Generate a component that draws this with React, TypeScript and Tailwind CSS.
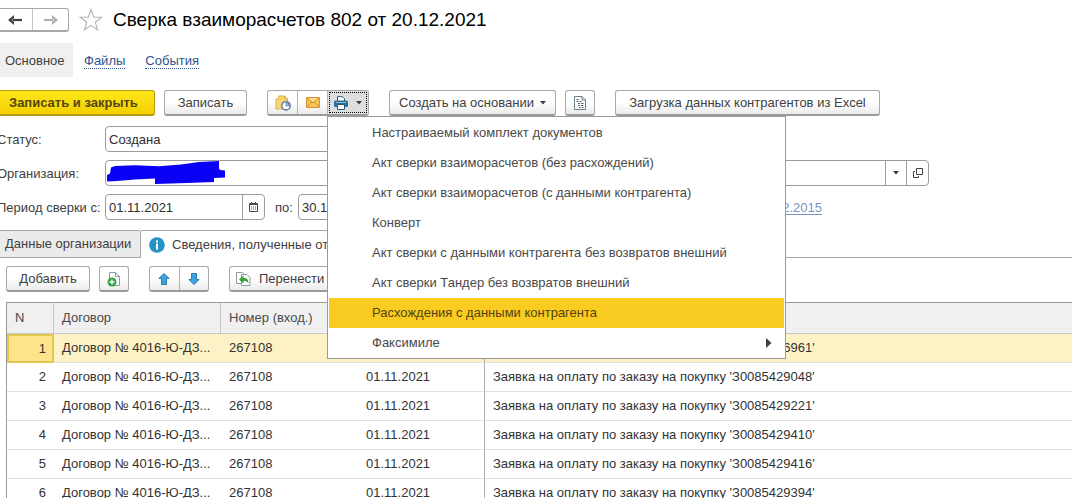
import React from "react";

const button =
  "flex h-[26px] shrink-0 items-center justify-center rounded-[3px] border border-b-2 border-[#a8a8a8] border-b-[#9a9a9a] bg-linear-to-b from-white from-50% to-[#ebebeb] whitespace-nowrap text-[#404040]";
const segment = "flex h-full items-center justify-center";
const segmented =
  "flex h-[26px] shrink-0 divide-x divide-[#b5b5b5] rounded-[3px] border border-b-2 border-[#a8a8a8] border-b-[#9a9a9a] bg-linear-to-b from-white from-50% to-[#ebebeb]";
const field = "flex h-[26px] overflow-hidden rounded-[4px] border border-[#9c9c9c] bg-white";
const input = "h-full w-full min-w-0 px-[3px] text-[#2e2e2e] outline-none";

const menuItems = [
  "Настраиваемый комплект документов",
  "Акт сверки взаиморасчетов (без расхождений)",
  "Акт сверки взаиморасчетов (с данными контрагента)",
  "Конверт",
  "Акт сверки с данными контрагента без возвратов внешний",
  "Акт сверки Тандер без возвратов внешний",
  "Расхождения с данными контрагента",
  "Факсимиле",
];

const orders = [
  "З0085426961",
  "З0085429048",
  "З0085429221",
  "З0085429410",
  "З0085429416",
  "З0085429394",
];

function Caret() {
  return (
    <svg width="6" height="4" viewBox="0 0 6 4" aria-hidden="true">
      <path d="M0 0h6L3 3.5z" fill="#404040" />
    </svg>
  );
}

function NavArrow({ color, flip }: { color: string; flip?: boolean }) {
  return (
    <svg width="14" height="12" viewBox="0 0 14 12" aria-hidden="true">
      <path
        d={flip ? "M0 6h9" : "M14 6H5"}
        fill="none"
        stroke={color}
        strokeWidth="2.2"
      />
      <path
        d={flip ? "M8 1l6 5-6 5V8l2-2-2-2z" : "M6 1L0 6l6 5V8L4 6l2-2z"}
        fill={color}
      />
    </svg>
  );
}

function Star() {
  return (
    <svg width="24" height="24" viewBox="0 0 24 24" aria-hidden="true">
      <path
        d="M12 1.5l2.7 7.6 8 .2-6.4 4.9 2.3 7.8L12 17.400l-6.600 4.600 2.300-7.800L1.300 9.300l8-.2z"
        fill="#fff"
        stroke="#b4b4b4"
        strokeWidth="1.1"
      />
    </svg>
  );
}

function NoteClockIcon() {
  return (
    <svg width="16" height="16" viewBox="0 0 16 16" aria-hidden="true">
      <path d="M3.500 1h6l3 3v10H1V4h2.500z" fill="#f5d778" stroke="#dcb04a" />
      <path d="M9.500 1v3h3z" fill="#fff3c4" stroke="#d2a540" strokeWidth=".8" />
      <circle cx="11" cy="10.800" r="4.200" fill="#fff" stroke="#5f7399" strokeWidth="1.400" />
      <path d="M11 10.800V7.500a3.300 3.300 0 0 1 3.300 3.300z" fill="#a9bfe0" stroke="#5f7399" strokeWidth=".8" />
    </svg>
  );
}

function MailIcon() {
  return (
    <svg width="14" height="11" viewBox="0 0 14 11" aria-hidden="true">
      <rect x=".5" y=".5" width="13" height="10" rx=".5" fill="#f8c65c" stroke="#d98b24" />
      <path d="M2 1h10L7 5z" fill="#fde09a" />
      <path d="M1 1l6 5 6-5M1 10l4.500-5M13 10L8.500 5" fill="none" stroke="#d98b24" />
    </svg>
  );
}

function PrinterIcon() {
  return (
    <svg width="14" height="14" viewBox="0 0 14 14" aria-hidden="true">
      <path d="M3.500 5V.7h5L10.500 2.700V5" fill="#fff" stroke="#29597d" />
      <rect x="0" y="4.500" width="14" height="6.500" rx="1.500" fill="#2f6c96" />
      <path d="M2 6.500h10" stroke="#8fbad6" />
      <path d="M3.500 8.500h7v5h-7z" fill="#fff" stroke="#29597d" />
    </svg>
  );
}

function ReportIcon() {
  return (
    <svg width="12" height="14" viewBox="0 0 12 14" aria-hidden="true">
      <path d="M.5.5h7.500l3.500 3.500v9.500H.5z" fill="#fff" stroke="#6e7f8c" />
      <path d="M8 .5V4h3.500" fill="none" stroke="#6e7f8c" />
      <path
        d="M2.500 3.500h2M2.500 5.500h2M5.500 5.500h2M4 7.500h2M7 7.500h2.500M4 9.500h2M7 9.500h2.500M5 11.500h1.500M7.500 11.500h2"
        stroke="#4d5c68"
      />
    </svg>
  );
}

function CalendarIcon() {
  return (
    <svg width="9" height="10" viewBox="0 0 9 10" aria-hidden="true">
      <path d="M.5 1.500h8v8h-8z" fill="#fff" stroke="#4a4a4a" />
      <path d="M0 2.500h9M2.500 0v2M6.500 0v2" stroke="#4a4a4a" />
      <path d="M2 5h1M4 5h1M6 5h1M2 7h1M4 7h1M6 7h1" stroke="#4a4a4a" />
    </svg>
  );
}

function OpenIcon() {
  return (
    <svg width="10" height="10" viewBox="0 0 10 10" aria-hidden="true">
      <path d="M3.500.5h6v6h-6zM2 3.500H.5v6h5V8" fill="none" stroke="#404040" />
    </svg>
  );
}

function InfoIcon() {
  return (
    <svg width="16" height="16" viewBox="0 0 16 16" aria-hidden="true">
      <circle cx="8" cy="8" r="7.800" fill="#2492c4" />
      <path d="M7 3.500h2v2H7zM7 6.500h2v6H7z" fill="#fff" />
    </svg>
  );
}

function AddCopyIcon() {
  return (
    <svg width="14" height="16" viewBox="0 0 14 16" aria-hidden="true">
      <path d="M2.500 1.500h6L12.500 5.500v9h-10z" fill="#fff" stroke="#8d9aa3" />
      <path d="M8.500 1.500v4h4" fill="none" stroke="#8d9aa3" />
      <circle cx="5" cy="11" r="4.500" fill="#32a044" />
      <path d="M5 8.500v5M2.500 11h5" stroke="#fff" strokeWidth="1.400" />
    </svg>
  );
}

function BlueArrow({ down }: { down?: boolean }) {
  return (
    <svg width="12" height="12" viewBox="0 0 12 12" aria-hidden="true">
      <path
        d={down ? "M6 11.500L.8 6.500h2.700v-6h5v6h2.700z" : "M6 .5L.8 5.500h2.700v6h5v-6h2.700z"}
        fill="#3ba3df"
        stroke="#2473a8"
        strokeWidth=".9"
      />
    </svg>
  );
}

function TransferIcon() {
  return (
    <svg width="15" height="14" viewBox="0 0 15 14" aria-hidden="true">
      <path d="M.5.5h6l2 2v9h-8z" fill="#fff" stroke="#8d9aa3" />
      <path d="M5.500 2.500h5.500l3 3v8H5.500z" fill="#fff" stroke="#8d9aa3" />
      <path d="M3 7.500l4.500-4v2.500c3.500 0 5 1.500 5 5.500-1-2-2.200-2.500-5-2.500v2.500z" fill="#35a336" />
    </svg>
  );
}

function PrintMenu() {
  return (
    <div
      role="menu"
      className="absolute top-full left-[-1px] z-10 mt-[2px] flex w-[459px] flex-col border border-[#9a9a9a] bg-white px-px pt-px"
    >
      {menuItems.map((item, i) => (
        <button
          key={item}
          role="menuitem"
          className={
            i === 6
              ? "flex h-[30px] items-center justify-between bg-[#facb21] pr-3 pl-[43px] text-left text-[#54430c]"
              : "flex h-[30px] items-center justify-between pr-3 pl-[43px] text-left text-[#4a4a4a]"
          }
        >
          {item}
          {i === 7 && (
            <svg width="6" height="10" viewBox="0 0 6 10" aria-hidden="true">
              <path d="M0 0v10l5.500-5z" fill="#404040" />
            </svg>
          )}
        </button>
      ))}
    </div>
  );
}

export default function App() {
  return (
    <main className="h-screen overflow-hidden bg-white font-['Liberation_Sans',Arial,sans-serif] text-[13px] leading-4 text-[#404040]">
      <header className="-ml-1 flex items-center pt-2">
        <div className="flex h-6 w-[73px] divide-x divide-[#c4c4c4] rounded-[3px] border border-b-2 border-[#a8a8a8] bg-white">
          <button aria-label="Назад" className={segment + " flex-1"}>
            <NavArrow color="#404040" />
          </button>
          <button aria-label="Вперед" className={segment + " flex-1"}>
            <NavArrow color="#b0b0b0" flip />
          </button>
        </div>
        <button aria-label="Избранное" className="ml-[10px]">
          <Star />
        </button>
        <h1 className="ml-[10px] text-[19px] leading-6 whitespace-nowrap text-black">
          Сверка взаиморасчетов 802 от 20.12.2021
        </h1>
      </header>

      <nav className="mt-[11px] flex h-[34px] items-center">
        <a href="#main" className="flex h-full w-[73px] items-center bg-[#f0f0f0] pt-px pl-[5px] text-[#404040]">
          Основное
        </a>
        <a href="#files" className="mt-[2px] ml-[11px] border-b border-dotted border-[#2f5490] leading-[14px] text-[#2f5490]">
          Файлы
        </a>
        <a href="#events" className="mt-[2px] ml-5 border-b border-dotted border-[#2f5490] leading-[14px] text-[#2f5490]">
          События
        </a>
      </nav>

      <div className="-ml-1 mt-[13px] flex items-center">
        <button className="flex h-[26px] w-[159px] shrink-0 items-center rounded-[3px] border border-b-2 border-[#b89c14] bg-linear-to-b from-[#ffe71a] to-[#f3d000] pl-3 font-bold whitespace-nowrap text-[#54480c]">
          Записать и закрыть
        </button>
        <button className={button + " ml-[9px] w-[83px]"}>Записать</button>
        <div className={segmented + " ml-5 w-[102px]"}>
          <button aria-label="Напоминание" className={segment + " w-[30px]"}>
            <NoteClockIcon />
          </button>
          <button aria-label="Отправить" className={segment + " w-[30px]"}>
            <MailIcon />
          </button>
          <div className="relative flex-1">
            <button
              aria-label="Печать"
              className="flex h-full w-full items-center justify-center gap-2 bg-[#dedede] outline outline-dotted outline-offset-[-2px] outline-black"
            >
              <PrinterIcon />
              <Caret />
            </button>
            <PrintMenu />
          </div>
        </div>
        <button className={button + " ml-5 w-[167px] gap-[6px]"}>
          Создать на основании
          <Caret />
        </button>
        <button aria-label="Отчет" className={button + " ml-[9px] w-[30px]"}>
          <ReportIcon />
        </button>
        <button className={button + " ml-5 w-[265px]"}>Загрузка данных контрагентов из Excel</button>
      </div>

      <form className="-ml-[3px] mt-[10px] grid grid-cols-[108px_1fr] items-center gap-y-2">
        <label htmlFor="status" className="pt-px">Статус:</label>
        <div className={field + " w-[400px]"}>
          <input id="status" className={input} defaultValue="Создана" />
        </div>

        <label htmlFor="org" className="pt-px">Организация:</label>
        <div className="relative">
          <div className={field + " w-[824px] divide-x divide-[#9c9c9c]"}>
            <input id="org" className={input} />
            <button type="button" aria-label="Выбрать" className={segment + " w-[21px] shrink-0"}>
              <Caret />
            </button>
            <button type="button" aria-label="Открыть" className={segment + " w-[21px] shrink-0"}>
              <OpenIcon />
            </button>
          </div>
          <svg className="absolute top-px left-[2px]" width="119" height="24" viewBox="0 0 119 24" aria-hidden="true">
            <path
              d="M4 6.500l4-1.500 20-.8 24 1L74 3.500 92 1l20-1v7.500l1 1.500 5 .5v7l-11 .5v4L80 22l-32 1v-5.500l-20 1L10 20l-10 .5V14l3-1.500z"
              fill="#0a00f5"
            />
          </svg>
        </div>

        <label htmlFor="from" className="pt-px whitespace-nowrap">Период сверки с:</label>
        <div className="flex items-center">
          <div className={field + " w-[160px] divide-x divide-[#9c9c9c]"}>
            <input id="from" className={input} defaultValue="01.11.2021" />
            <button type="button" aria-label="Календарь" className={segment + " w-[21px] shrink-0"}>
              <CalendarIcon />
            </button>
          </div>
          <label htmlFor="to" className="ml-[10px] w-[23px] pt-px">по:</label>
          <div className={field + " w-[160px] divide-x divide-[#9c9c9c]"}>
            <input id="to" className={input} defaultValue="30.11.2021" />
            <button type="button" aria-label="Календарь" className={segment + " w-[21px] shrink-0"}>
              <CalendarIcon />
            </button>
          </div>
          <div className="w-[364px] pt-px text-right">
            <a href="#contract" className="text-[#7896bd] underline underline-offset-2">02.12.2015</a>
          </div>
        </div>
      </form>

      <div role="tablist" className="mt-[10px] flex h-7">
        <button
          role="tab"
          aria-selected="false"
          className="w-[140px] shrink-0 border-y border-[#a8a8a8] bg-[#ebebeb] pl-[5px] text-left whitespace-nowrap"
        >
          Данные организации
        </button>
        <button
          role="tab"
          aria-selected="true"
          className="flex w-[300px] shrink-0 items-center gap-[7px] rounded-t-[3px] border border-b-0 border-[#a8a8a8] pl-2 whitespace-nowrap"
        >
          <InfoIcon />
          Сведения, полученные от контрагента
        </button>
        <div className="flex-1 border-b border-[#a8a8a8]" />
      </div>

      <div className="mt-2 flex pl-[6px]">
        <button className={button + " w-[84px]"}>Добавить</button>
        <button aria-label="Добавить копированием" className={button + " ml-[9px] w-[30px]"}>
          <AddCopyIcon />
        </button>
        <div className={segmented + " ml-5 w-[60px]"}>
          <button aria-label="Вверх" className={segment + " flex-1"}>
            <BlueArrow />
          </button>
          <button aria-label="Вниз" className={segment + " flex-1"}>
            <BlueArrow down />
          </button>
        </div>
        <button className={button + " ml-5 gap-2 px-[6px]"}>
          <TransferIcon />
          Перенести данные
        </button>
      </div>

      <div className="mt-[10px] ml-[6px] border-t border-l border-[#9a9a9a]">
        <table className="w-full table-fixed border-separate border-spacing-0 text-[#333]">
          <colgroup>
            <col className="w-[47px]" />
            <col className="w-[167px]" />
            <col className="w-[137px]" />
            <col className="w-[127px]" />
            <col />
          </colgroup>
          <thead>
            <tr className="h-[31px] bg-[#f0f0f0] text-left text-[#4a4a4a]">
              <th className="border-r border-b border-[#c8c8c8] pl-2 font-normal">N</th>
              <th className="border-r border-b border-[#c8c8c8] pl-2 font-normal">Договор</th>
              <th className="border-r border-b border-[#c8c8c8] pl-2 font-normal">Номер (вход.)</th>
              <th className="border-r border-b border-[#c8c8c8] pl-2 font-normal" />
              <th className="border-b border-[#c8c8c8] pl-2 font-normal" />
            </tr>
          </thead>
          <tbody>
            {orders.map((order, i) => (
              <tr key={order} className={i === 0 ? "h-[29px] bg-[#fdf2c6]" : "h-[29px]"}>
                <td
                  className={
                    i === 0
                      ? "border-2 border-[#e0c84e] bg-[#fde48a] pr-[6px] text-right"
                      : "border-b border-[#e0e0e0] pr-2 text-right"
                  }
                >
                  {i + 1}
                </td>
                <td className="border-b border-[#e0e0e0] pl-2 whitespace-nowrap">Договор № 4016-Ю-ДЗ...</td>
                <td className="border-b border-[#e0e0e0] pl-2">267108</td>
                <td className="border-r border-b border-[#e0e0e0] border-r-[#b0b0b0] pl-2">
                  {i > 0 && "01.11.2021"}
                </td>
                <td className="border-b border-[#e0e0e0] pl-2 whitespace-nowrap">
                  Заявка на оплату по заказу на покупку '{order}'
                </td>
              </tr>
            ))}
          </tbody>
        </table>
      </div>
    </main>
  );
}
